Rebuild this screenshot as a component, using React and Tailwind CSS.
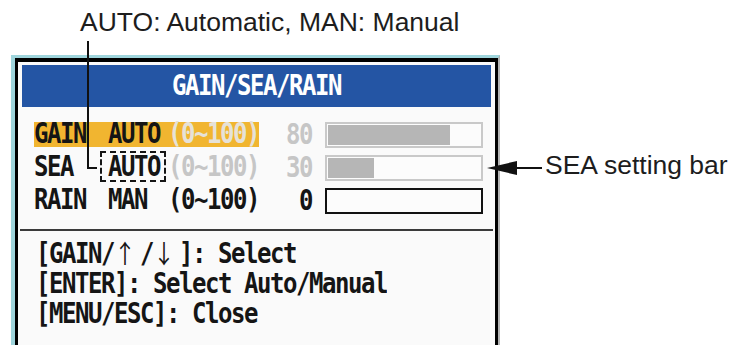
const MONO = "font-['DejaVu_Sans_Mono','Liberation_Mono',monospace] font-bold text-[24px] tracking-[-1.45px]"
const TALL = 'scale-y-[1.16]'

const ROWS = [
  { label: 'GAIN', mode: 'AUTO', value: 80, active: true, auto: true },
  { label: 'SEA', mode: 'AUTO', value: 30, focus: true, auto: true },
  { label: 'RAIN', mode: 'MAN', value: 0 },
]

function Arrow({ children }) {
  return (
    <span className="inline-block w-[26px] font-['Noto_Sans_CJK_JP',sans-serif] font-normal text-[22px] tracking-normal">
      {children}
    </span>
  )
}

function Bar({ value, auto }) {
  return (
    <div
      className={`w-[158px] h-[26px] p-[1px] border-2 ${auto ? 'border-[#c9c9c9]' : 'border-[#111]'} bg-[#fcfcfc]`}
    >
      {value > 0 && <div className="h-full bg-[#b6b6b6]" style={{ width: `${value}%` }} />}
    </div>
  )
}

function Row({ row }) {
  const dim = row.auto ? (row.active ? 'text-[#e6e2d8]' : 'text-[#c6c6c6]') : 'text-[#151515]'
  return (
    <div className="h-[33px] flex items-center">
      <div className={`flex items-center h-[25px] leading-[25px] ${row.active ? 'bg-[#f1b530]' : ''}`}>
        <span className={`w-[74px] text-[#151515] ${TALL}`}>{row.label}</span>
        <span className="w-[60px] relative text-[#151515]">
          <span className={`block ${TALL}`}>{row.mode}</span>
          {row.focus && (
            <span className="absolute -left-[8px] -top-[4px] w-[66px] h-[31px] border-2 border-dashed border-[#151515]" />
          )}
        </span>
        <span className={`w-[91px] ${dim} ${TALL}`}>(0~100)</span>
      </div>
      <span className={`w-[53px] text-right ${TALL} ${row.auto ? 'text-[#c6c6c6]' : 'text-[#151515]'}`}>
        {row.value}
      </span>
      <div className="ml-[13px]">
        <Bar value={row.value} auto={row.auto} />
      </div>
    </div>
  )
}

export default function App() {
  return (
    <div className="relative w-[731px] h-[345px] overflow-hidden bg-white font-['Liberation_Sans',Arial,sans-serif]">
      <div className="pt-[7px] pl-[80px] text-[26.5px] leading-[30px] text-[#1d1d1d]">
        AUTO: Automatic, MAN: Manual
      </div>

      <div className="mt-[18px] ml-[11px] w-[489px] h-[300px] border-t-[3px] border-l-[4px] border-r-[2px] border-l-[#9fd5dc] border-t-[#9fd5dc] border-r-[#b4b4b4]">
        <div className="h-full border-t-[4px] border-x-[3px] border-black bg-[#fafafa] px-[4px] pt-[3px]">
          <div className={`h-[42px] bg-[#2455a4] text-white flex items-center justify-center ${MONO}`}>
            <span className={TALL}>GAIN/SEA/RAIN</span>
          </div>

          <div className={`pt-[11px] pl-[12px] ${MONO}`}>
            {ROWS.map((row) => (
              <Row key={row.label} row={row} />
            ))}
          </div>

          <div className="mt-[12px] -mx-[2px] h-[2px] bg-[#3a3a3a]" />

          <div className={`pt-[6px] pl-[14px] leading-[30px] text-[#151515] ${MONO}`}>
            <div className={TALL}>
              [GAIN/<Arrow>↑</Arrow>/<Arrow>↓</Arrow>]: Select
            </div>
            <div className={TALL}>[ENTER]: Select Auto/Manual</div>
            <div className={TALL}>[MENU/ESC]: Close</div>
          </div>
        </div>
      </div>

      {/* callout: AUTO/MAN */}
      <div className="absolute left-[87px] top-[41px] w-[2px] h-[128px] bg-[#111]" />
      <div className="absolute left-[87px] top-[167px] w-[10px] h-[2px] bg-[#111]" />

      {/* callout: SEA setting bar */}
      <svg className="absolute left-[486px] top-[158px]" width="56" height="20" viewBox="0 0 56 20">
        <path d="M1 10 L31 3 L31 17 Z" fill="#111" />
        <rect x="30" y="9" width="26" height="2" fill="#111" />
      </svg>
      <div className="absolute left-[545px] top-[150px] text-[26.5px] leading-[30px] text-[#1d1d1d] whitespace-nowrap">
        SEA setting bar
      </div>
    </div>
  )
}
